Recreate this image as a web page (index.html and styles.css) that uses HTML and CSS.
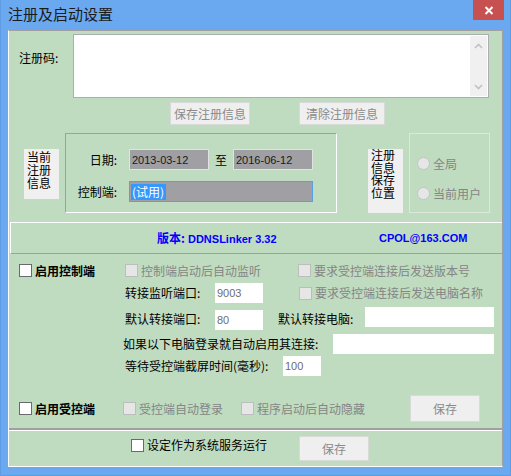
FILE: index.html
```html
<!DOCTYPE html>
<html lang="zh-CN">
<head>
<meta charset="utf-8">
<title>注册及启动设置</title>
<link rel="stylesheet" href="styles.css">
</head>
<body>
<div class="window">
  <div class="titlebar">
    <span class="title">注册及启动设置</span>
    <div class="close">
      <svg width="10" height="9" viewBox="0 0 10 9"><path d="M1.5 1L8.5 8M8.5 1L1.5 8" stroke="#fff" stroke-width="2"/></svg>
    </div>
  </div>
  <div class="client">
    <div class="reg">
      <div class="reg-row">
        <span class="reg-label">注册码:</span>
        <div class="memo">
          <div class="memo-body"></div>
          <div class="vscroll">
            <svg width="9" height="6" viewBox="0 0 9 6"><path d="M1 5L4.5 1.5L8 5" fill="none" stroke="#c2c2c2" stroke-width="1.6"/></svg>
            <svg width="9" height="6" viewBox="0 0 9 6"><path d="M1 1L4.5 4.5L8 1" fill="none" stroke="#c2c2c2" stroke-width="1.6"/></svg>
          </div>
        </div>
      </div>
      <div class="btn-row">
        <div class="btn btn-save-reg">保存注册信息</div>
        <div class="btn btn-clear-reg">清除注册信息</div>
      </div>
      <div class="info-row">
        <div class="vlabel v1">当前注册信息</div>
        <div class="group g1">
          <div class="field-row r1">
            <span class="flabel">日期:</span>
            <div class="tbox date">2013-03-12</div>
            <span class="to">至</span>
            <div class="tbox date">2016-06-12</div>
          </div>
          <div class="field-row r2">
            <span class="flabel">控制端:</span>
            <div class="tbox ctrl"><span class="sel">(试用)</span></div>
          </div>
        </div>
        <div class="vlabel v2">注册信息保存位置</div>
        <div class="group g2">
          <div class="radio rd1"><span class="rc"></span><span class="dis">全局</span></div>
          <div class="radio rd2"><span class="rc"></span><span class="dis">当前用户</span></div>
        </div>
      </div>
    </div>

    <div class="version">
      <span class="ver"><span class="ver-cjk">版本:</span> DDNSLinker 3.32</span>
      <span class="mail">CPOL@163.COM</span>
    </div>

    <div class="controls">
      <div class="crow row1">
        <div class="cell c-main"><span class="cb"></span><span class="bold">启用控制端</span></div>
        <div class="cell c-mid1"><span class="cb dis-cb"></span><span class="dis">控制端启动后自动监听</span></div>
        <div class="cell"><span class="cb dis-cb"></span><span class="dis">要求受控端连接后发送版本号</span></div>
      </div>
      <div class="crow row2">
        <span class="lbl lbl-port">转接监听端口:</span>
        <div class="input in-port">9003</div>
        <div class="cell c-ver2"><span class="cb dis-cb"></span><span class="dis">要求受控端连接后发送电脑名称</span></div>
      </div>
      <div class="crow row3">
        <span class="lbl lbl-port">默认转接端口:</span>
        <div class="input in-port">80</div>
        <span class="lbl lbl-pc">默认转接电脑:</span>
        <div class="input in-pc"></div>
      </div>
      <div class="crow row4">
        <span class="lbl lbl-auto">如果以下电脑登录就自动启用其连接:</span>
        <div class="input in-auto"></div>
      </div>
      <div class="crow row5">
        <span class="lbl lbl-wait">等待受控端截屏时间(毫秒):</span>
        <div class="input in-wait">100</div>
      </div>
      <div class="crow row6">
        <div class="cell c-main2"><span class="cb"></span><span class="bold">启用受控端</span></div>
        <div class="cell c-auto"><span class="cb dis-cb"></span><span class="dis">受控端自动登录</span></div>
        <div class="cell c-hide"><span class="cb dis-cb"></span><span class="dis">程序启动后自动隐藏</span></div>
        <div class="btn btn-save1">保存</div>
      </div>
    </div>

    <div class="bottom">
      <div class="cell c-svc"><span class="cb"></span><span class="svc-text">设定作为系统服务运行</span></div>
      <div class="btn btn-save2">保存</div>
    </div>
  </div>
</div>
</body>
</html>
```

FILE: styles.css
```css
* { box-sizing: border-box; }
html, body { margin: 0; padding: 0; }
body {
  width: 511px;
  height: 476px;
  overflow: hidden;
  font-family: "Noto Sans CJK SC", "Liberation Sans", sans-serif;
  font-size: 12px;
  line-height: 14px;
  color: #000;
  background: #6aa8f0;
}
.window {
  width: 511px;
  height: 476px;
  background: #6aa8f0;
  display: flex;
  flex-direction: column;
  border-left: 1px solid #5f9ce6;
  border-right: 1px solid #5f9ce6;
  border-bottom: 1px solid #5f9ce6;
}
.titlebar {
  height: 30px;
  display: flex;
  align-items: flex-start;
}
.title {
  margin: 4px 0 0 7px;
  font-size: 15px;
  line-height: 20px;
  color: #1b1b1b;
}
.close {
  margin-left: auto;
  margin-right: 6px;
  width: 31px;
  height: 20px;
  background: #c75050;
  display: flex;
  align-items: center;
  justify-content: center;
}
.client {
  margin: 0 7px;
  height: 437px;
  background: #c0dcc0;
  border-top: 1px solid #a0a0a0;
  border-right: 1px solid #a0a0a0;
  border-left: 1px solid #ffffff;
  border-bottom: 1px solid #ffffff;
  display: flex;
  flex-direction: column;
}

/* registration section */
.reg {
  height: 191px;
  padding-left: 10px;
  display: flex;
  flex-direction: column;
}
.reg-row {
  margin-top: 3px;
  display: flex;
}
.reg-label {
  width: 54px;
  padding-top: 17px;
}
.memo {
  width: 416px;
  height: 64px;
  background: #fff;
  border: 1px solid #abadb3;
  display: flex;
}
.memo-body { flex: 1; }
.vscroll {
  width: 17px;
  margin: 1px 1px 1px 0;
  background: #f0f0f0;
  display: flex;
  flex-direction: column;
  align-items: center;
  justify-content: space-between;
  padding: 7px 0 6px;
}
.btn-row {
  margin-top: 4px;
  padding-left: 151px;
  display: flex;
}
.btn {
  height: 23px;
  background: #efefef;
  border: 1px solid #d9d9d9;
  color: #8a8a8a;
  display: flex;
  align-items: center;
  justify-content: center;
}
.btn-save-reg { width: 80px; }
.btn-clear-reg { width: 86px; margin-left: 49px; }

.info-row {
  margin-top: 8px;
  display: flex;
  align-items: flex-start;
}
.vlabel {
  width: 35px;
  margin-top: 16px;
  background: #f0f0f0;
  padding: 0 4px 0 3px;
  line-height: 13px;
  word-break: break-all;
}
.v1 { margin-left: 5px; height: 50px; padding-top: 1px; }
.v2 { margin-left: 31px; height: 64px; padding-top: 0; line-height: 12.6px; }
.group {
  height: 80px;
}
.g1 {
  margin-left: 6px;
  width: 272px;
  border-top: 1px solid #a0a0a0;
  border-left: 1px solid #a0a0a0;
  border-bottom: 1px solid #ffffff;
  border-right: 1px solid #ffffff;
}
.g2 {
  margin-left: 6px;
  width: 81px;
  border: 1px solid #dbe8db;
}
.field-row {
  display: flex;
  align-items: center;
  height: 21px;
}
.r1 { margin-top: 15px; }
.r2 { margin-top: 11px; }
.flabel {
  width: 63px;
  text-align: right;
  padding-right: 12px;
}
.tbox {
  height: 21px;
  background: #a0a0a4;
  border: 1px solid #e2e2e2;
  font-family: "Liberation Sans", sans-serif;
  font-size: 11px;
  color: #1a1a1a;
  display: flex;
  align-items: center;
  padding-left: 2px;
}
.date { width: 80px; }
.to { width: 24px; text-align: center; }
.ctrl {
  width: 184px;
  border-color: #5a9fe6;
  padding-left: 1px;
}
.sel {
  background: #3399ff;
  color: #fff;
  font-family: "Noto Sans CJK SC", sans-serif;
  font-size: 12px;
  line-height: 16px;
  padding: 0 2px 0 1px;
}
.radio {
  display: flex;
  align-items: center;
  margin-left: 7px;
  height: 13px;
}
.rd1 { margin-top: 23px; }
.rd2 { margin-top: 17px; }
.rc {
  width: 13px;
  height: 13px;
  border-radius: 50%;
  background: #e6e6e6;
  border: 1px solid #c4c4c4;
  margin-right: 3px;
}
.dis { color: #858585; }

/* version bar */
.version {
  height: 32px;
  margin-left: 1px;
  border-top: 1px solid #ffffff;
  border-left: 1px solid #ffffff;
  border-bottom: 1px solid #a0a0a0;
  display: flex;
  align-items: center;
  padding-left: 146px;
  font-family: "Liberation Sans", "Noto Sans CJK SC", sans-serif;
  font-weight: bold;
  font-size: 11px;
  color: #0000ff;
}
.ver { width: 222px; }
.ver-cjk {
  font-family: "Noto Sans CJK SC", sans-serif;
  font-size: 12px;
}

/* controls */
.controls {
  height: 176px;
  border-bottom: 2px solid #a0a0a0;
  padding-left: 10px;
  display: flex;
  flex-direction: column;
}
.crow {
  display: flex;
  align-items: center;
}
.cell {
  display: flex;
  align-items: center;
}
.cb {
  width: 13px;
  height: 13px;
  background: #fff;
  border: 1px solid #6a6a6a;
  margin-right: 3px;
  flex: none;
}
.dis-cb {
  background: #e6e6e6;
  border-color: #bdbdbd;
}
.bold { font-weight: bold; }
.row1 { margin-top: 10px; height: 13px; }
.c-main { width: 106px; }
.c-mid1 { width: 173px; }
.row2 { margin-top: 6px; height: 20px; padding-left: 106px; }
.lbl-port { width: 90px; }
.input {
  height: 20px;
  background: #fff;
  font-family: "Liberation Sans", sans-serif;
  font-size: 11px;
  color: #6d6d6d;
  display: flex;
  align-items: center;
  padding-left: 2px;
}
.in-port { width: 48px; }
.c-ver2 { margin-left: 36px; }
.row3 { margin-top: 4px; height: 24px; align-items: flex-start; padding-left: 106px; }
.row3 .lbl { margin-top: 5px; }
.row3 .in-port { margin-top: 3px; }
.lbl-pc { margin-left: 15px; width: 87px; }
.in-pc { width: 129px; }
.row4 { margin-top: 3px; height: 20px; padding-left: 104px; }
.lbl-auto { width: 210px; }
.in-auto { width: 161px; }
.row5 { margin-top: 2px; height: 20px; padding-left: 106px; }
.lbl-wait { width: 158px; }
.in-wait { width: 38px; }
.row6 { margin-top: 19px; height: 27px; }
.c-main2 { width: 104px; }
.c-auto { width: 118px; }
.c-hide { width: 169px; }
.btn-save1 { width: 70px; height: 27px; }

/* bottom */
.bottom {
  height: 36px;
  border-top: 1px solid #ffffff;
  padding: 5px 0 0 122px;
  display: flex;
  align-items: flex-start;
}
.c-svc { width: 168px; margin-top: 2px; }
.btn-save2 { width: 70px; height: 25px; }
```
